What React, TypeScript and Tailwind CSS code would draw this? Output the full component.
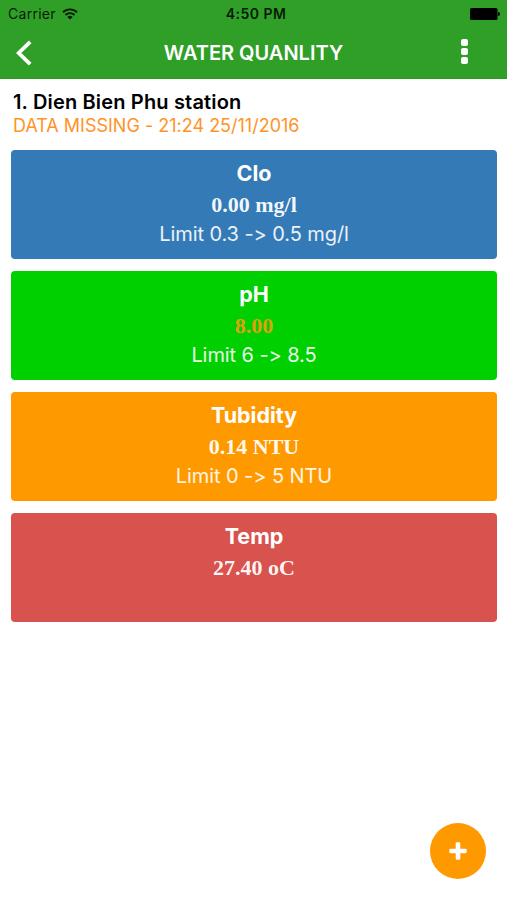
type Reading = {
  name: string;
  value: string;
  limit?: string;
  bg: string;
  valueClass: string;
};

const readings: Reading[] = [
  { name: 'Clo', value: '0.00 mg/l', limit: 'Limit 0.3 -> 0.5 mg/l', bg: 'bg-[#347ab6]', valueClass: 'text-white/95' },
  { name: 'pH', value: '8.00', limit: 'Limit 6 -> 8.5', bg: 'bg-[#00cf00]', valueClass: 'text-[#dda30c]' },
  { name: 'Tubidity', value: '0.14 NTU', limit: 'Limit 0 -> 5 NTU', bg: 'bg-[#ff9900]', valueClass: 'text-white/95' },
  { name: 'Temp', value: '27.40 oC', bg: 'bg-[#d8524e]', valueClass: 'text-white/95' },
];

export default function App() {
  return (
    <main className="relative h-[900px] w-[507px] overflow-hidden bg-white font-['Inter',sans-serif] [font-variant-ligatures:no-contextual]">
      <header className="h-[79px] border-b border-[#2b9a25] bg-[#2f9f28]">
        <StatusBar />
        <nav className="grid h-[49px] grid-cols-[1fr_auto_1fr] items-center">
          <button aria-label="Back" className="ml-4 w-4">
            <svg className="h-[26px] w-4" viewBox="0 0 16 26" fill="none" stroke="white" strokeWidth={3.8}>
              <path d="M14.2 1.8L2.7 13l11.5 11.2" />
            </svg>
          </button>
          <h1 className="text-[20px] leading-6 font-semibold text-white">WATER QUANLITY</h1>
          <button aria-label="More" className="mr-[39px] mb-[3px] flex flex-col gap-[2px] justify-self-end">
            <span className="size-[7px] rounded-[2px] bg-white" />
            <span className="size-[7px] rounded-[2px] bg-white" />
            <span className="size-[7px] rounded-[2px] bg-white" />
          </button>
        </nav>
      </header>

      <section className="px-[13px] pt-[11px]">
        <h2 className="text-[20px] leading-6 font-semibold tracking-[0.008em] whitespace-nowrap text-black">1. Dien Bien Phu station</h2>
        <p className="text-[18px] leading-6 whitespace-nowrap text-[#ff9326]">DATA MISSING - 21:24 25/11/2016</p>
      </section>

      <section className="mt-3 flex flex-col gap-3 pr-[10px] pl-[11px]">
        {readings.map((reading) => (
          <ReadingCard key={reading.name} {...reading} />
        ))}
      </section>

      <button
        aria-label="Add"
        className="absolute top-[823px] left-[430px] flex size-[56px] items-center justify-center rounded-full bg-[#ff9900]"
      >
        <svg className="size-[18px]" viewBox="0 0 18 18" fill="white">
          <rect x="6.7" y="0.3" width="4.6" height="17.4" rx="1.2" />
          <rect x="0.3" y="6.7" width="17.4" height="4.6" rx="1.2" />
        </svg>
      </button>
    </main>
  );
}

function StatusBar() {
  return (
    <div className="grid h-7 grid-cols-[1fr_auto_1fr] items-center text-[14px] leading-5 text-black/85">
      <div className="flex items-center gap-[6px] pl-[8px]">
        <span className="tracking-[0.02em]">Carrier</span>
        <svg className="h-3 w-4" viewBox="0 0 16 12" fill="none" stroke="currentColor" strokeWidth={1.9}>
          <path d="M1 4.2a10 10 0 0 1 14 0" />
          <path d="M3.5 7a6.4 6.4 0 0 1 9 0" />
          <path d="M8 11.6L5.4 9a3.7 3.7 0 0 1 5.2 0z" fill="currentColor" stroke="none" />
        </svg>
      </div>
      <span className="pl-[5px] font-semibold tracking-[0.035em]">4:50 PM</span>
      <svg className="mr-[7px] h-3 w-[30px] justify-self-end" viewBox="0 0 30 12" fill="black">
        <rect x="0" y="0" width="27.5" height="12" rx="1.5" />
        <path d="M28 4a2 2 0 0 1 0 4z" />
      </svg>
    </div>
  );
}

function ReadingCard({ name, value, limit, bg, valueClass }: Reading) {
  return (
    <div className={`flex h-[109px] flex-col items-center rounded-[4px] pt-[9px] whitespace-nowrap ${bg}`}>
      <h3 className="text-[21.5px] leading-7 font-bold text-white">{name}</h3>
      <p className={`mt-1 font-['Liberation_Serif',serif] text-[22px] leading-7 font-bold ${valueClass}`}>{value}</p>
      {limit && <p className="mt-px text-[20px] leading-7 tracking-[-0.004em] text-white/90">{limit}</p>}
    </div>
  );
}
